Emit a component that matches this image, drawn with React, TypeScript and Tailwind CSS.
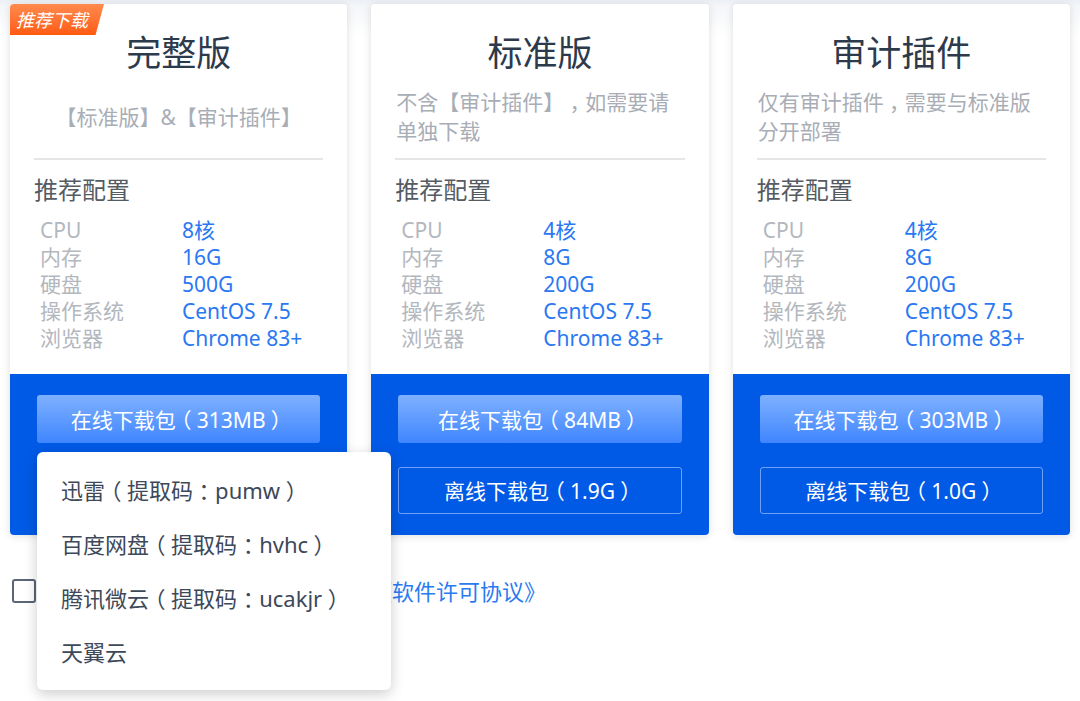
import React from "react";

type Spec = { label: string; value: string };

type Edition = {
  title: string;
  desc: string;
  centered?: boolean;
  badge?: boolean;
  specs: Spec[];
  online: string;
  offline: string;
};

const EDITIONS: Edition[] = [
  {
    title: "完整版",
    desc: "【标准版】&【审计插件】",
    centered: true,
    badge: true,
    specs: [
      { label: "CPU", value: "8核" },
      { label: "内存", value: "16G" },
      { label: "硬盘", value: "500G" },
      { label: "操作系统", value: "CentOS 7.5" },
      { label: "浏览器", value: "Chrome 83+" },
    ],
    online: "在线下载包（313MB）",
    // hidden behind the open mirror menu
    offline: "",
  },
  {
    title: "标准版",
    desc: "不含【审计插件】，如需要请单独下载",
    specs: [
      { label: "CPU", value: "4核" },
      { label: "内存", value: "8G" },
      { label: "硬盘", value: "200G" },
      { label: "操作系统", value: "CentOS 7.5" },
      { label: "浏览器", value: "Chrome 83+" },
    ],
    online: "在线下载包（84MB）",
    offline: "离线下载包（1.9G）",
  },
  {
    title: "审计插件",
    desc: "仅有审计插件，需要与标准版分开部署",
    specs: [
      { label: "CPU", value: "4核" },
      { label: "内存", value: "8G" },
      { label: "硬盘", value: "200G" },
      { label: "操作系统", value: "CentOS 7.5" },
      { label: "浏览器", value: "Chrome 83+" },
    ],
    online: "在线下载包（303MB）",
    offline: "离线下载包（1.0G）",
  },
];

const MIRRORS = [
  "迅雷（提取码：pumw）",
  "百度网盘（提取码：hvhc）",
  "腾讯微云（提取码：ucakjr）",
  "天翼云",
];

// the original font centres full-width punctuation; Noto CJK SC pushes it to one side,
// so use the half-width form and pad it back out to a full em
function Cjk({ text }: { text: string }) {
  return (
    <>
      {Array.from(text).map((ch, i) =>
        "（）：，".includes(ch) ? (
          <span key={i} className="px-[0.25em] [font-feature-settings:'halt']">
            {ch}
          </span>
        ) : (
          ch
        )
      )}
    </>
  );
}

function EditionCard({ e }: { e: Edition }) {
  return (
    <div className="relative flex flex-col rounded-[4px] bg-white shadow-[0_1px_8px_rgba(0,0,0,0.13)] overflow-hidden">
      {e.badge && (
        <div className="absolute left-0 top-0 h-[31px] w-[94px] bg-gradient-to-b from-[#ff8a4c] to-[#ff5a0e] [clip-path:polygon(0_0,100%_0,91%_100%,0_100%)] flex items-center pl-[6px]">
          <span className="text-[18px] italic text-white leading-none">推荐下载</span>
        </div>
      )}

      {/* top: description and recommended config */}
      <div className="h-[370px] px-6 pt-6">
        <h2 className="text-center text-[35px] leading-[50px] text-[#2c3a4c]">{e.title}</h2>
        <div
          className={
            "mt-[10px] h-[58px] px-[1px] text-[21px] leading-[29px] text-[#a8adb6] " +
            (e.centered ? "flex items-center justify-center text-center" : "")
          }
        >
          <span>
            <Cjk text={e.desc} />
          </span>
        </div>
        <div className="mt-3 h-[2px] bg-[#e6e6e8]" />
        <div className="mt-[14px] text-[24px] leading-[32px] text-[#555b63]">推荐配置</div>
        <div className="mt-[11px] pl-[6px]">
          {e.specs.map((s) => (
            <div key={s.label} className="flex text-[21px] leading-[27px]">
              <span className="w-[142px] text-[#b3b7be]">{s.label}</span>
              <span className="text-[#2a78f2]">{s.value}</span>
            </div>
          ))}
        </div>
      </div>

      {/* bottom: download buttons */}
      <div className="flex flex-col gap-6 bg-[#005ae6] px-[27px] pt-[21px] pb-[21px]">
        <button className="h-[48px] rounded-[3px] bg-gradient-to-b from-[#7eb0ff] to-[#3f85ff] pt-[3px] text-[21px] text-white">
          <Cjk text={e.online} />
        </button>
        <button className="h-[47px] rounded-[3px] border border-[rgba(170,200,255,0.65)] pt-[3px] text-[21px] text-white">
          <Cjk text={e.offline} />
        </button>
      </div>
    </div>
  );
}

export default function App() {
  return (
    <div
      className="relative h-[701px] w-[1080px] overflow-hidden bg-[linear-gradient(to_bottom,#eceff5_0px,#f4f6f9_6px,#ffffff_36px)] [text-spacing-trim:space-all]"
      style={{ fontFamily: '"Noto Sans", "Noto Sans CJK SC", sans-serif' }}
    >
      <div className="grid grid-cols-3 gap-6 px-[10px] pt-[4px]">
        {EDITIONS.map((e) => (
          <EditionCard key={e.title} e={e} />
        ))}
      </div>

      {/* licence agreement row */}
      <div className="mt-[41px] flex items-center pl-[12px]">
        <span className="h-[24px] w-[24px] rounded-[3px] border-[2.5px] border-[#5b6575] bg-white" />
        <span className="ml-[334px] text-[22px] leading-[30px] text-[#2b7bf0]">《软件许可协议》</span>
      </div>

      {/* mirror dropdown */}
      <div className="absolute left-[37px] top-[452px] w-[354px] rounded-[6px] bg-white pt-[11px] pb-[11px] shadow-[0_4px_14px_rgba(0,0,0,0.2)]">
        {MIRRORS.map((m) => (
          <div key={m} className="flex h-[54px] items-center pl-6 text-[22px] text-[#3d4859]">
            <span>
              <Cjk text={m} />
            </span>
          </div>
        ))}
      </div>
    </div>
  );
}
